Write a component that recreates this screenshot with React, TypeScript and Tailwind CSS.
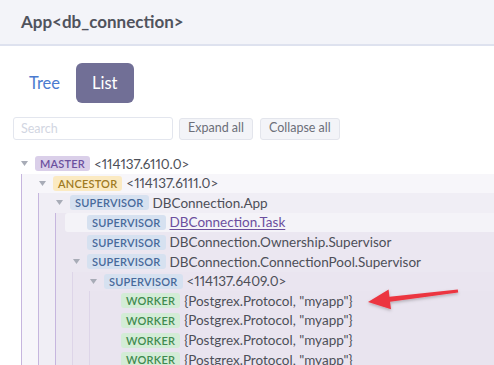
import React from 'react';

type Kind = 'MASTER' | 'ANCESTOR' | 'SUPERVISOR' | 'WORKER';

type TreeNode = {
  kind: Kind;
  label: string;
  link?: boolean;
  selected?: boolean;
  children?: TreeNode[];
};

const BADGE: Record<Kind, string> = {
  MASTER: 'bg-[#dacfe9] text-[#6b4f9e]',
  ANCESTOR: 'bg-[#fbeac2] text-[#a07a22]',
  SUPERVISOR: 'bg-[#d6e1f0] text-[#47699a]',
  WORKER: 'bg-[#d3ecd6] text-[#3f8a4f]',
};

// one background per nesting level
const LEVEL_BG = ['', 'bg-[#f7f6fa]', 'bg-[#f0eef5]', 'bg-[#ebe7f1]', 'bg-[#eae5f0]', 'bg-[#e9e4ef]'];
const LEVEL_BORDER = ['', 'border-[#c6b6de]', 'border-[#c6b6de]', 'border-[#c6b6de]', 'border-[#ddd5e8]', 'border-[#ddd5e8]'];

const worker = (): TreeNode => ({ kind: 'WORKER', label: '{Postgrex.Protocol, "myapp"}' });

const TREE: TreeNode = {
  kind: 'MASTER',
  label: '<114137.6110.0>',
  children: [
    {
      kind: 'ANCESTOR',
      label: '<114137.6111.0>',
      children: [
        {
          kind: 'SUPERVISOR',
          label: 'DBConnection.App',
          children: [
            { kind: 'SUPERVISOR', label: 'DBConnection.Task', link: true, selected: true },
            { kind: 'SUPERVISOR', label: 'DBConnection.Ownership.Supervisor' },
            {
              kind: 'SUPERVISOR',
              label: 'DBConnection.ConnectionPool.Supervisor',
              children: [
                {
                  kind: 'SUPERVISOR',
                  label: '<114137.6409.0>',
                  children: [worker(), worker(), worker(), worker(), worker(), worker()],
                },
              ],
            },
          ],
        },
      ],
    },
  ],
};

function Caret() {
  return (
    <svg width="7" height="5" viewBox="0 0 7 5">
      <polygon points="0,0 7,0 3.5,5" fill="#a8acb7" />
    </svg>
  );
}

function Node({ node, depth }: { node: TreeNode; depth: number }) {
  const hasKids = !!node.children?.length;
  return (
    <div>
      <div
        className={`flex items-center h-[19.6px] ${depth > 0 ? 'ml-[9px]' : ''} ${
          node.selected ? 'bg-[#f4f3f8] rounded-l-[3px]' : ''
        }`}
      >
        <span className="w-[22px] flex justify-center shrink-0">{hasKids && <Caret />}</span>
        <span
          className={`h-[15px] px-[5px] rounded-[3px] flex items-center text-[11px] font-semibold tracking-[0.2px] leading-none ${BADGE[node.kind]}`}
        >
          {node.kind}
        </span>
        <span
          className={`ml-[4px] text-[13.5px] proportional-nums whitespace-nowrap ${
            node.link ? 'text-[#6b4f9e] underline underline-offset-2' : 'text-[#4d4f58]'
          }`}
        >
          {node.label}
        </span>
      </div>
      {hasKids && (
        <div
          className={`${depth > 0 ? 'ml-[16px]' : 'ml-[8px]'} border-l ${LEVEL_BORDER[depth + 1]} ${LEVEL_BG[depth + 1]}`}
        >
          {node.children!.map((c, i) => (
            <Node key={i} node={c} depth={depth + 1} />
          ))}
        </div>
      )}
    </div>
  );
}

export default function App() {
  return (
    <div className="relative w-[494px] h-[365px] overflow-hidden bg-white" style={{ fontFamily: 'Lato, "Noto Sans", sans-serif' }}>
      <header className="h-[46px] bg-[#f3f4f9] border-b-2 border-[#dee2ef] flex items-center px-[21px]">
        <h1 className="text-[17px] font-bold text-[#50535d]">App&lt;db_connection&gt;</h1>
      </header>

      <div className="pt-[17px] px-[13px]">
        <div className="flex items-center">
          <button className="h-[40px] px-[16px] text-[16.5px] text-[#4a7bcf]">Tree</button>
          <button className="h-[40px] px-[16px] text-[16.5px] text-white bg-[#716f96] rounded-[6px]">List</button>
        </div>

        <div className="flex items-center gap-[6px] mt-[14px]">
          <input
            placeholder="Search"
            className="w-[160px] h-[23px] border border-[#e3e6ee] rounded-[3px] px-[7px] text-[12.5px] placeholder:text-[#d2d6e2] outline-none"
          />
          <button className="h-[22px] px-[8px] text-[12.5px] text-[#6c6f79] bg-[#f3f4f8] border border-[#e3e5ec] rounded-[3px]">
            Expand all
          </button>
          <button className="h-[22px] px-[8px] text-[12.5px] text-[#6c6f79] bg-[#f3f4f8] border border-[#e3e5ec] rounded-[3px] ml-[1px]">
            Collapse all
          </button>
        </div>
      </div>

      <div className="mt-[14px] pl-[13px]">
        <Node node={TREE} depth={0} />
      </div>

      <svg className="absolute left-0 top-0 pointer-events-none" width="494" height="365" viewBox="0 0 494 365">
        <defs>
          <filter id="sh" x="-20%" y="-50%" width="140%" height="200%">
            <feDropShadow dx="0" dy="1.5" stdDeviation="1.5" floodColor="#000" floodOpacity="0.25" />
          </filter>
        </defs>
        <polygon
          filter="url(#sh)"
          fill="#ec3641"
          points="368,302 388.6,289.4 389.5,296.8 457.8,289.5 458.2,292.5 390.1,301.8 391,309.2"
        />
      </svg>
    </div>
  );
}
